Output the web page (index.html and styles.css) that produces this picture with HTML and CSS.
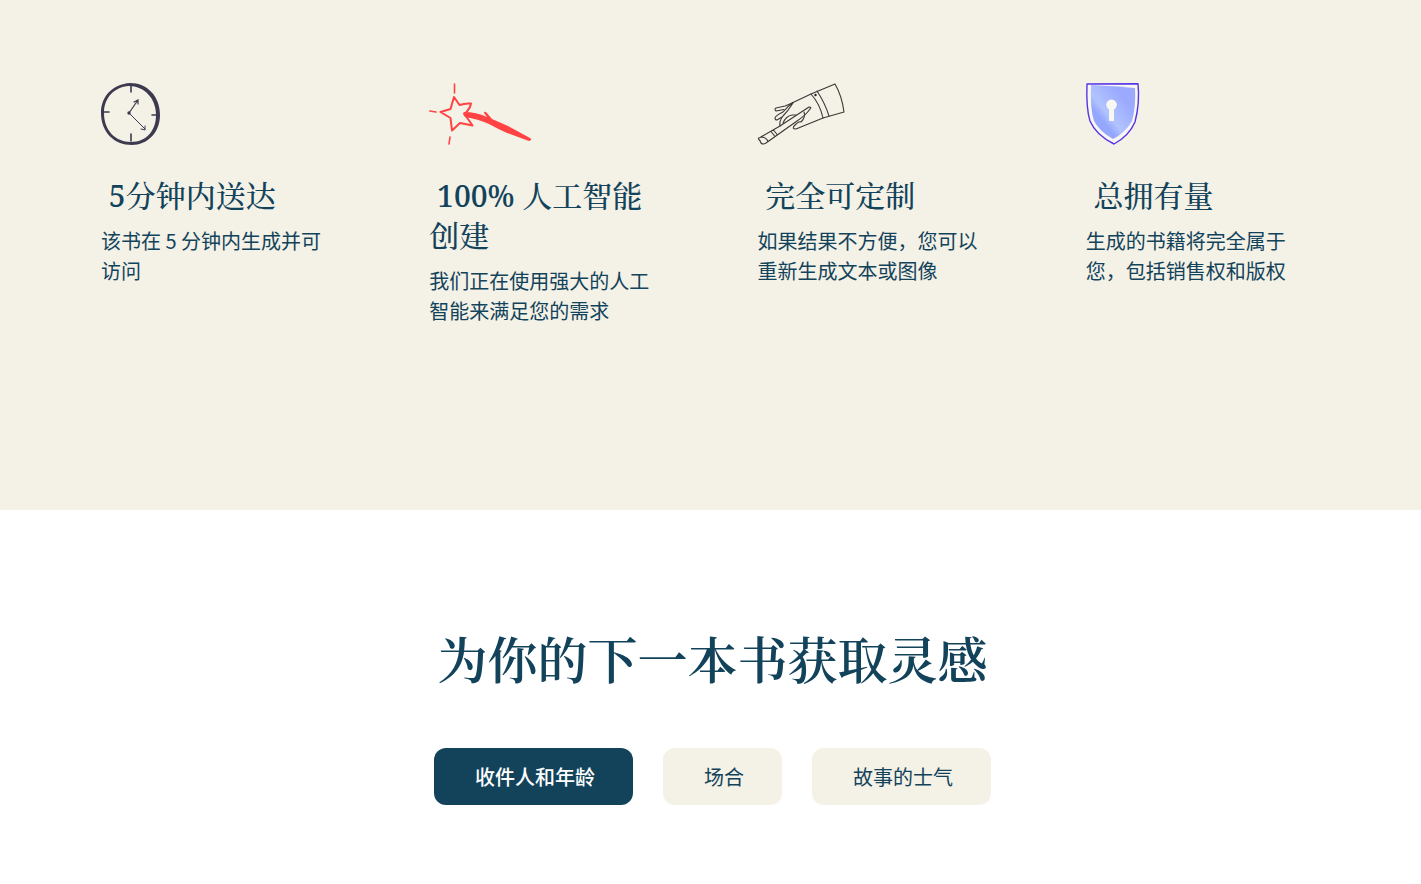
FILE: index.html
```
<!DOCTYPE html>
<html lang="zh-CN">
<head>
    <meta charset="UTF-8">
    <meta name="viewport" content="width=device-width, initial-scale=1.0">
    <title>为你的下一本书获取灵感</title>
    <link rel="stylesheet" href="styles.css">
</head>
<body>
    <section class="features">
        <div class="features-grid">
            <div class="feature">
                <svg class="feature-icon" width="60" height="62" viewBox="0 0 60 62" aria-hidden="true">
                    <path fill="#3d3a50" fill-rule="evenodd" d="M29 0C46 0 59 13 59 32C59 50 46 62 31 62C13 62 0 49 0 30C0 13 12 1 29 0ZM28 3C13 4 3 15 3 30C3 47 14 59 30 59C45 59 55 48 55 32C55 15 43 3 28 3Z"/>
                    <g fill="none" stroke="#3d3a50" stroke-linecap="round">
                        <path stroke-width="1.6" d="M30 3V9M30 51V58M3 29H8M51 32H56"/>
                        <path stroke-width="1.2" d="M28 30L37 17M33 19L37 17L37 21"/>
                        <path stroke-width="1" d="M28 30L44 46M40 46L44 47L44 43"/>
                    </g>
                    <circle cx="28" cy="30" r="1.7" fill="#3d3a50"/>
                </svg>
                <h3>&nbsp;5分钟内送达</h3>
                <p>该书在 5 分钟内生成并可访问</p>
            </div>
            <div class="feature">
                <svg class="feature-icon" width="104" height="62" viewBox="0 0 104 62" aria-hidden="true">
                    <g fill="none" stroke="#ff4242" stroke-linecap="round" stroke-linejoin="round">
                        <path stroke-width="1.6" d="M25.5 1V10M0.8 28L7 29M21 54L20 61"/>
                        <path stroke-width="2" d="M25 14L30.5 22Q36 20 42 20.5Q41 26 35.5 31L43.5 42.5L31 40L23 47.5L21.5 35L11.5 29L21.5 26Z"/>
                    </g>
                    <path fill="#ff4242" d="M35 29Q47 29 58 34L55 30Q55 28 57 29L63 36L79 43L101 55Q104 57 100 58L78 50Q69 46 60 41Q49 36 36 34Q33 31 35 29Z"/>
                </svg>
                <h3>&nbsp;100% 人工智能创建</h3>
                <p>我们正在使用强大的人工智能来满足您的需求</p>
            </div>
            <div class="feature">
                <svg class="feature-icon" width="88" height="62" viewBox="0 0 88 62" aria-hidden="true">
                    <g fill="none" stroke="#3b3838" stroke-width="1.1" stroke-linecap="round" stroke-linejoin="round">
                        <!-- cuff -->
                        <path d="M53 11L77 1Q84 13 86 29L65 35Q62 21 53 11ZM59 8Q67 20 71 33"/>
                        <!-- hand -->
                        <path d="M53 11L35 19.5Q30 22 27 23L18 25Q16 26 18 28L26 26.5"/>
                        <path d="M35 19.500Q30 23 25 29Q17 33 17 35Q17 37 19 37L24 34M35 20Q30 28 25 33Q21 38 22 43"/>
                        <path d="M25 40Q28 33 34 32L38 32M46 29Q48 34 43 39Q41 38 37 42Q33 46 38 46L65 35"/>
                        <!-- brush -->
                        <path d="M22 43L51 24Q54 24 52 26Q48 32 39 38L8 60Q5 62 3 60Q2 57 0.500 56Q0 55 2 54.500L22 43M3 54Q8 54 10 58.500M13 48.500L17 53.500M15.500 47L19.500 52"/>
                    </g>
                    <circle cx="57.5" cy="12" r="1.2" fill="#222"/>
                </svg>
                <h3>&nbsp;完全可定制</h3>
                <p>如果结果不方便，您可以重新生成文本或图像</p>
            </div>
            <div class="feature">
                <svg class="feature-icon" width="54" height="62" viewBox="0 0 54 62" aria-hidden="true">
                    <defs>
                        <linearGradient id="shield-fill" x1="0" y1="1" x2="1" y2="0">
                            <stop offset="0.3" stop-color="#95a6ff"/>
                            <stop offset="0.42" stop-color="#b1c4ff"/>
                            <stop offset="0.75" stop-color="#9baaff"/>
                        </linearGradient>
                    </defs>
                    <path fill="#f8f7f2" d="M1 1H52Q53 20 49 39Q43 53 28 61Q10 52 4 38Q1 27 1 1Z"/>
                    <path fill="url(#shield-fill)" d="M5 2Q28 3 49 5Q50 24 46 38Q39 50 27 56Q14 49 8 38Q4 26 5 2Z"/>
                    <path fill="none" stroke="#5634e5" stroke-width="1.4" stroke-linejoin="round" d="M1 1L52 0.7Q54 20 49 39Q43 53 28 61Q10 52 4 38Q0 25 1 1Z"/>
                    <path fill="#f8f7f2" d="M23 26.5A5.3 5.3 0 1 1 28 26.5L28 38H23Z"/>
                </svg>
                <h3>&nbsp;总拥有量</h3>
                <p>生成的书籍将完全属于您，包括销售权和版权</p>
            </div>
        </div>
    </section>

    <section class="inspiration">
        <h2>为你的下一本书获取灵感</h2>
        <div class="tabs">
            <button type="button" class="tab active">收件人和年龄</button>
            <button type="button" class="tab">场合</button>
            <button type="button" class="tab">故事的士气</button>
        </div>
    </section>
</body>
</html>
```
FILE: styles.css
```
body {
    margin: 0;
    background-color: #fff;
    color: #12435b;
    font-family: "Noto Sans CJK SC", sans-serif;
    font-size: 20px;
    line-height: 30px;
}
h2, h3 {
    margin: 0;
    font-family: "Noto Serif", "Noto Serif CJK SC", "Noto Sans CJK SC", serif;
}
p {
    margin: 0;
}
.features {
    background-color: #f4f1e6;
    padding: 83px 16px 184px;
}
.features-grid {
    display: grid;
    grid-template-columns: repeat(4, 1fr);
    max-width: 1313px;
    margin: 0 auto;
}
.feature {
    padding: 0 49px 0 47px;
}
.feature-icon {
    display: block;
    margin-bottom: 31px;
    overflow: visible;
}
.feature h3 {
    margin-bottom: 10px;
    font-size: 30px;
    font-weight: 500;
    line-height: 40px;
}
.inspiration {
    padding: 120px 0 80px 4px;
    text-align: center;
}
.inspiration h2 {
    margin-bottom: 58px;
    font-size: 50px;
    font-weight: 600;
    line-height: 60px;
}
.tabs {
    display: flex;
    flex-wrap: wrap;
    justify-content: center;
    gap: 30px;
}
.tab {
    height: 57px;
    padding: 0 38px 0 41px;
    border: none;
    border-radius: 12px;
    background-color: #f4f1e6;
    color: #12435b;
    font-family: inherit;
    font-size: 20px;
    cursor: pointer;
}
.tab.active {
    background-color: #12435b;
    color: #fff;
    font-weight: 500;
}
```
